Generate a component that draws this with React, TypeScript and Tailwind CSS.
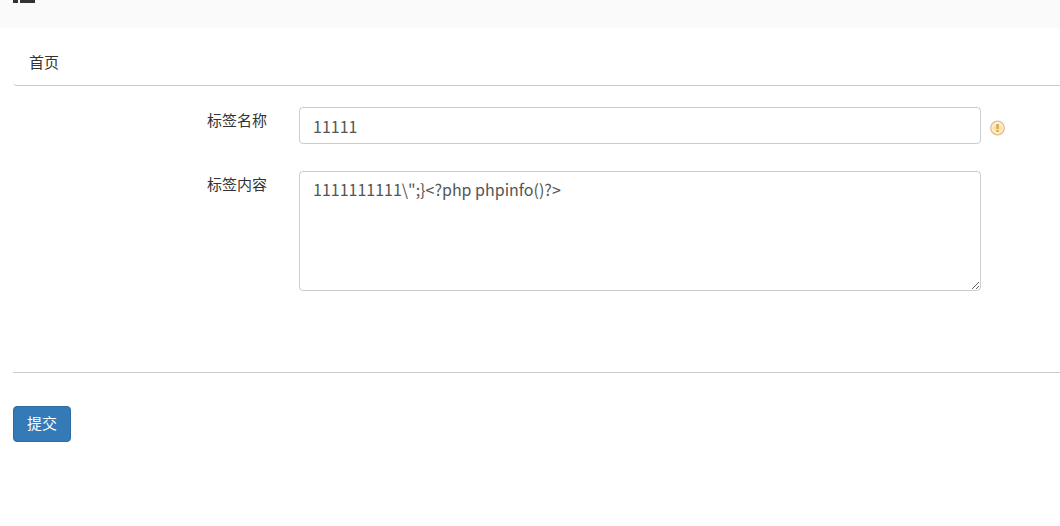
import React, { useState } from "react";

function ListIcon() {
  return (
    <svg width="22" height="3" viewBox="0 0 22 3" fill="#333333" aria-hidden="true">
      <rect x="0" y="-2" width="5" height="5" />
      <rect x="7" y="-2" width="15" height="5" />
    </svg>
  );
}

function NoticeIcon() {
  return (
    <svg width="16" height="16" viewBox="0 0 16 16" role="img" aria-label="提示">
      <defs>
        <linearGradient id="notice-fill" x1="0" y1="0" x2="0" y2="1">
          <stop offset="0" stopColor="#fdf3dc" />
          <stop offset="0.5" stopColor="#f9e0a0" />
          <stop offset="1" stopColor="#fdf2b4" />
        </linearGradient>
      </defs>
      <circle cx="8.5" cy="8" r="6.8" fill="#fdf6e4" stroke="#e0b995" strokeWidth="1.3" />
      <circle cx="8.5" cy="8" r="5.2" fill="url(#notice-fill)" />
      <rect x="7.2" y="4" width="2.6" height="5" fill="#d9ab58" />
      <rect x="7.2" y="10" width="2.6" height="2" fill="#d9ab58" />
    </svg>
  );
}

const fieldClass =
  "block w-full rounded border border-[#cccccc] bg-white px-[13px] font-['Noto_Sans_CJK_SC',sans-serif] text-base text-[#555555] outline-none focus:border-[#66afe9]";

export default function App() {
  const [name, setName] = useState("11111");
  const [content, setContent] = useState('1111111111\\";}<?php phpinfo()?>');

  return (
    <div className="bg-white font-['Noto_Sans_CJK_SC',sans-serif] text-[15px] leading-5 text-[#333333]">
      <header className="h-7 bg-[#fafafa] pl-[13px]">
        <button type="button" aria-label="菜单" className="block">
          <ListIcon />
        </button>
      </header>

      <main className="pl-[13px]">
        <nav className="rounded-bl border-b border-[#cccccc] px-4 pt-6 pb-[13px]">
          <a href="#" className="block">首页</a>
        </nav>

        <form onSubmit={(e) => e.preventDefault()}>
          <div className="flex flex-col gap-[27px] border-b border-[#cccccc] pt-[21px] pb-[81px]">
            <div className="flex">
              <label htmlFor="tag-name" className="w-[254px] shrink-0 pt-[3px] text-right">
                标签名称
              </label>
              <div className="ml-8 min-w-0 flex-1">
                <input
                  id="tag-name"
                  type="text"
                  value={name}
                  onChange={(e) => setName(e.target.value)}
                  className={`${fieldClass} h-[37px]`}
                />
              </div>
              <div className="w-[79px] shrink-0 pt-[13px] pl-2">
                <NoticeIcon />
              </div>
            </div>

            <div className="flex">
              <label htmlFor="tag-content" className="w-[254px] shrink-0 pt-[3px] text-right">
                标签内容
              </label>
              <div className="mr-[79px] ml-8 min-w-0 flex-1">
                <textarea
                  id="tag-content"
                  value={content}
                  onChange={(e) => setContent(e.target.value)}
                  spellCheck={false}
                  className={`${fieldClass} h-[120px] resize py-[7px] leading-5`}
                />
              </div>
            </div>
          </div>

          <button
            type="submit"
            className="mt-[33px] block h-9 cursor-pointer rounded border border-[#2e6da4] bg-[#337ab7] px-[13px] pb-[2px] text-white hover:bg-[#286090]"
          >
            提交
          </button>
        </form>
      </main>
    </div>
  );
}
